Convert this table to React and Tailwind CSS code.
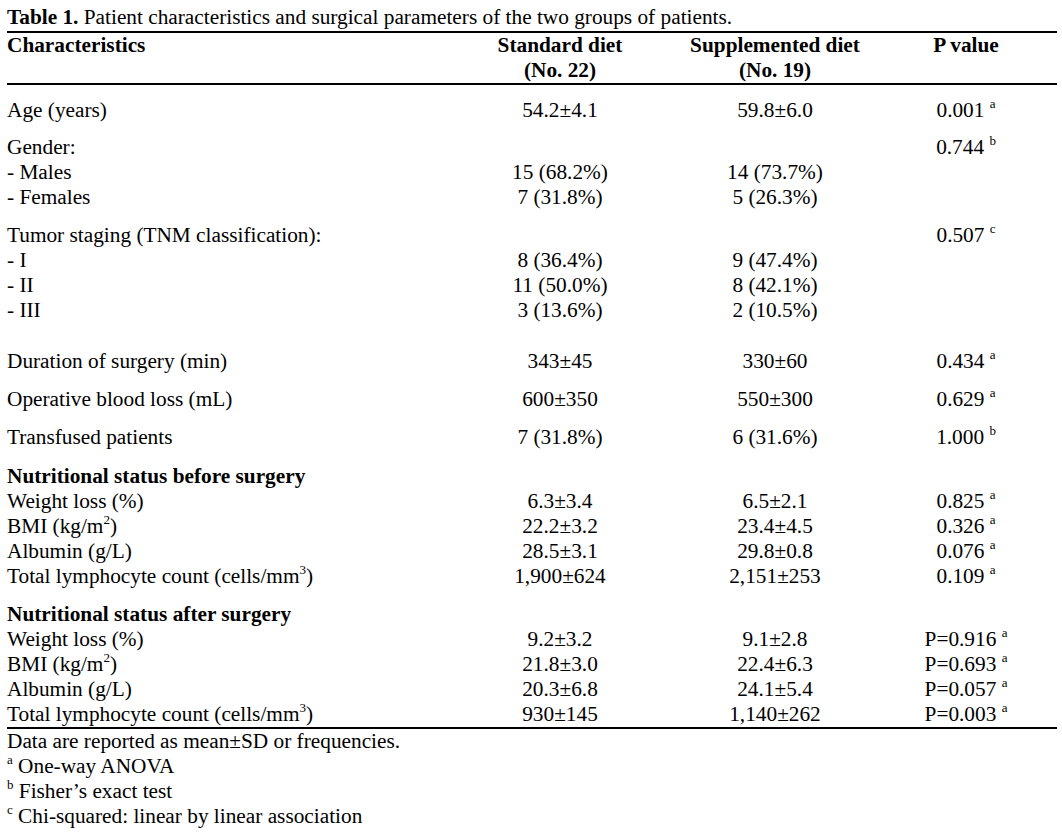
import React from 'react'

const Sup = ({ children }) => (
  <sup className="relative -top-[9px] text-[13px] leading-none">{children}</sup>
)

const Row = ({ label, a, b, p, bold = false, className = '' }) => (
  <div className={`flex leading-[25px] ${bold ? 'font-bold' : ''} ${className}`}>
    <div className="w-[453px] whitespace-nowrap">{label}</div>
    <div className="w-[200px] text-center whitespace-nowrap">{a}</div>
    <div className="w-[230px] text-center whitespace-nowrap">{b}</div>
    <div className="w-[152px] text-center whitespace-nowrap">{p}</div>
  </div>
)

const pv = (v, s) => (
  <>
    {v}&nbsp;<Sup>{s}</Sup>
  </>
)

const kgm2 = (
  <>
    BMI (kg/m<Sup>2</Sup>)
  </>
)

const lymph = (
  <>
    Total lymphocyte count (cells/mm<Sup>3</Sup>)
  </>
)

export default function App() {
  return (
    <div className="min-h-[837px] w-[1062px] bg-white text-black font-['Liberation_Serif','Times_New_Roman',serif] text-[21.3px]">
      <div className="ml-[7px] w-[1050px]">
        {/* title */}
        <div className="pt-[5px] leading-[25px] whitespace-nowrap">
          <span className="font-bold">Table 1.</span> Patient characteristics and surgical parameters of the two groups of patients.
        </div>

        {/* header */}
        <div className="mt-[1px] border-t-2 border-b-2 border-black">
          <Row bold label="Characteristics" a="Standard diet" b="Supplemented diet" p="P value" />
          <Row bold label="" a="(No. 22)" b="(No. 19)" p="" />
        </div>

        <Row className="mt-[13px]" label="Age (years)" a="54.2±4.1" b="59.8±6.0" p={pv('0.001', 'a')} />

        <Row className="mt-[12px]" label="Gender:" a="" b="" p={pv('0.744', 'b')} />
        <Row label="- Males" a="15 (68.2%)" b="14 (73.7%)" p="" />
        <Row label="- Females" a="7 (31.8%)" b="5 (26.3%)" p="" />

        <Row className="mt-[13px]" label="Tumor staging (TNM classification):" a="" b="" p={pv('0.507', 'c')} />
        <Row label="- I" a="8 (36.4%)" b="9 (47.4%)" p="" />
        <Row label="- II" a="11 (50.0%)" b="8 (42.1%)" p="" />
        <Row label="- III" a="3 (13.6%)" b="2 (10.5%)" p="" />

        <Row className="mt-[26px]" label="Duration of surgery (min)" a="343±45" b="330±60" p={pv('0.434', 'a')} />
        <Row className="mt-[13px]" label="Operative blood loss (mL)" a="600±350" b="550±300" p={pv('0.629', 'a')} />
        <Row className="mt-[13px]" label="Transfused patients" a="7 (31.8%)" b="6 (31.6%)" p={pv('1.000', 'b')} />

        <Row bold className="mt-[14px]" label="Nutritional status before surgery" a="" b="" p="" />
        <Row label="Weight loss (%)" a="6.3±3.4" b="6.5±2.1" p={pv('0.825', 'a')} />
        <Row label={kgm2} a="22.2±3.2" b="23.4±4.5" p={pv('0.326', 'a')} />
        <Row label="Albumin (g/L)" a="28.5±3.1" b="29.8±0.8" p={pv('0.076', 'a')} />
        <Row label={lymph} a="1,900±624" b="2,151±253" p={pv('0.109', 'a')} />

        <div className="mt-[13px] border-b-2 border-black">
          <Row bold label="Nutritional status after surgery" a="" b="" p="" />
          <Row label="Weight loss (%)" a="9.2±3.2" b="9.1±2.8" p={pv('P=0.916', 'a')} />
          <Row label={kgm2} a="21.8±3.0" b="22.4±6.3" p={pv('P=0.693', 'a')} />
          <Row label="Albumin (g/L)" a="20.3±6.8" b="24.1±5.4" p={pv('P=0.057', 'a')} />
          <Row label={lymph} a="930±145" b="1,140±262" p={pv('P=0.003', 'a')} />
        </div>

        {/* footnotes */}
        <div className="leading-[25px] whitespace-nowrap">
          <div>Data are reported as mean±SD or frequencies.</div>
          <div><Sup>a</Sup> One-way ANOVA</div>
          <div><Sup>b</Sup> Fisher’s exact test</div>
          <div><Sup>c</Sup> Chi-squared: linear by linear association</div>
        </div>
      </div>
    </div>
  )
}
